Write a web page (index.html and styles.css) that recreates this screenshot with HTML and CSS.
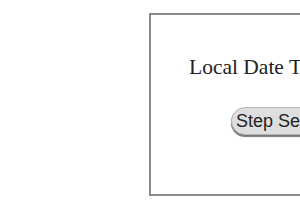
FILE: index.html
```html
<!DOCTYPE html>
<html lang="en">
<head>
    <meta charset="UTF-8">
    <meta name="viewport" content="width=device-width, initial-scale=1.0">
    <title>Local Date Time</title>
    <link rel="stylesheet" href="styles.css">
</head>
<body>

<div class="frame">
    <div class="title">Local Date Time</div>
    <button type="button" class="step-btn">Step Seconds</button>
</div>

</body>
</html>
```

FILE: styles.css
```css
body { margin: 0; background-color: #ffffff; font-family: "Liberation Serif", "Times New Roman", serif; overflow: hidden; }
.frame { margin: 13px 0 0 149px; width: 300px; height: 138px; padding-top: 41px; border: 2px solid #8a8a8a; display: flex; flex-direction: column; align-items: flex-start; }
.title { margin-left: 38px; font-size: 21.5px; line-height: 23px; color: #222; white-space: nowrap; }
.step-btn { margin: 28px 0 0 80px; height: 28px; padding: 0 4px; border: 1px solid #b5b5b5; border-radius: 14px; background-color: #dedede; box-shadow: 0 2px 1px #777; font-family: "Liberation Sans", Arial, sans-serif; font-size: 18px; color: #222; white-space: nowrap; }
```
